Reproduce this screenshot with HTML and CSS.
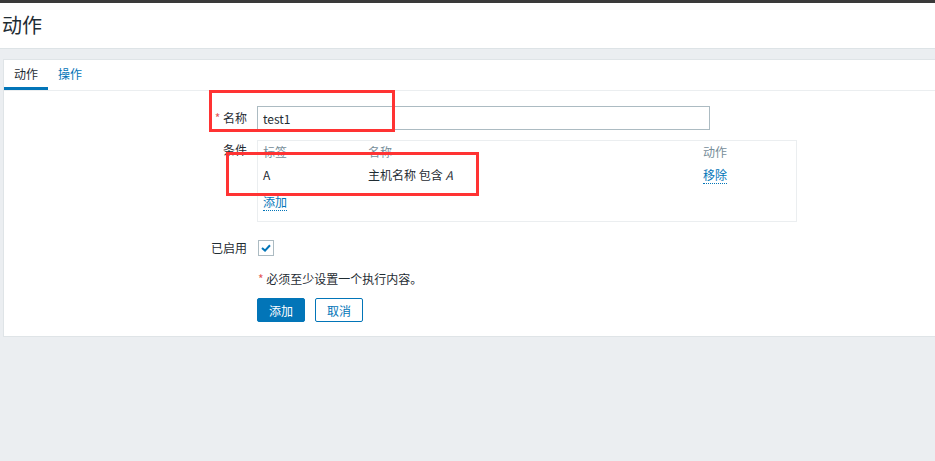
FILE: index.html
```html
<!DOCTYPE html>
<html lang="zh">
<head>
<meta charset="utf-8">
<title>动作</title>
<link rel="stylesheet" href="styles.css">
</head>
<body>
<div class="topbar"></div>
<header class="page-header"><h1>动作</h1></header>
<main class="content">
  <section class="card">
    <nav class="tabs">
      <span class="tab active">动作</span>
      <span class="tab">操作</span>
    </nav>
    <div class="form">
      <div class="row">
        <label class="label"><span class="req">*</span> 名称</label>
        <div class="field"><input class="text-input" type="text" value="test1"></div>
      </div>
      <div class="row row-cond">
        <label class="label">条件</label>
        <div class="field">
          <div class="cond-table">
            <div class="cond-grid">
              <span class="th">标签</span><span class="th">名称</span><span class="th">动作</span>
              <span class="td">A</span><span class="td">主机名称 包含 <i>A</i></span><span class="td"><a class="link">移除</a></span>
            </div>
            <a class="link add-link">添加</a>
          </div>
        </div>
      </div>
      <div class="row row-check">
        <label class="label">已启用</label>
        <div class="field">
          <span class="checkbox"><svg width="10" height="8" viewBox="0 0 10 8"><path d="M1 4 L4 6.6 L9 1.2" fill="none" stroke="#0275b8" stroke-width="2"/></svg></span>
        </div>
      </div>
      <div class="row row-note">
        <span class="label"></span>
        <div class="field note"><span class="req">*</span> 必须至少设置一个执行内容。</div>
      </div>
      <div class="row row-buttons">
        <span class="label"></span>
        <div class="field buttons">
          <button class="btn primary">添加</button>
          <button class="btn secondary">取消</button>
        </div>
      </div>
    </div>
  </section>
</main>
<div class="mark mark-1"></div>
<div class="mark mark-2"></div>
</body>
</html>
```
FILE: styles.css
```css
* { box-sizing: border-box; }
html, body { margin: 0; padding: 0; }
body {
  background: #ebeef1;
  font-family: "Noto Sans CJK SC", "Liberation Sans", sans-serif;
  font-size: 12px;
  color: #1f2c33;
  width: 935px;
  height: 461px;
  overflow: hidden;
  position: relative;
}
.topbar { height: 3px; background: #3a3a3a; }
.page-header {
  background: #fff;
  height: 46px;
  border-bottom: 1px solid #dde3e6;
  display: flex;
  align-items: center;
}
.page-header h1 {
  margin: 0 0 2px 2px;
  font-size: 20px;
  font-weight: normal;
  color: #1f2c33;
  line-height: 1;
}
.content { padding: 10px 0 0 3px; }
.card {
  background: #fff;
  border: 1px solid #dfe4e7;
  border-right: none;
  height: 278px;
}
.tabs {
  display: flex;
  height: 31px;
  border-bottom: 1px solid #ebeef0;
}
.tab {
  padding: 0 10px;
  line-height: 28px;
  color: #0275b8;
  border-bottom: 3px solid transparent;
}
.tab.active { color: #1f2c33; border-bottom-color: #0275b8; }
.form { padding-top: 15px; }
.row { display: flex; }
.label {
  width: 243px;
  text-align: right;
  flex: none;
  line-height: 24px;
}
.field { margin-left: 10px; }
.req { color: #e45959; }
.text-input {
  width: 453px;
  height: 24px;
  border: 1px solid #acbbc2;
  padding: 0 5px;
  font: inherit;
  font-size: 12px;
  color: #1f2c33;
  outline: none;
}
.row-cond { margin-top: 10px; }
.row-cond .label { line-height: 20px; }
.cond-table {
  width: 540px;
  height: 82px;
  border: 1px solid #ebeef0;
  padding: 2px 5px;
}
.cond-grid {
  display: grid;
  grid-template-columns: 105px 335px 1fr;
  row-gap: 5px;
}
.th { color: #768d99; line-height: 18px; }
.td { line-height: 18px; }
.link {
  color: #0275b8;
  border-bottom: 1px dotted #0275b8;
  cursor: pointer;
}
.add-link { display: inline-block; margin-top: 10px; line-height: 16px; }
.row-check { margin-top: 18px; }
.row-check .label { line-height: 16px; }
.checkbox {
  display: flex;
  align-items: center;
  justify-content: center;
  width: 16px;
  height: 16px;
  border: 1px solid #acbbc2;
  margin-left: 1px;
}
.row-note { margin-top: 14px; }
.note { line-height: 18px; margin-left: 11px; }
.row-buttons { margin-top: 10px; }
.buttons { display: flex; gap: 10px; }
.btn {
  font: inherit;
  font-size: 12px;
  height: 24px;
  width: 48px;
  border-radius: 2px;
  padding: 0;
}
.btn.primary { background: #0275b8; color: #fff; border: 1px solid #0275b8; }
.btn.secondary { background: #fff; color: #0275b8; border: 1px solid #0275b8; }
.mark {
  position: absolute;
  border: 3px solid #f33;
}
.mark-1 { left: 209px; top: 90px; width: 186px; height: 42px; }
.mark-2 { left: 226px; top: 152px; width: 253px; height: 44px; }
```
